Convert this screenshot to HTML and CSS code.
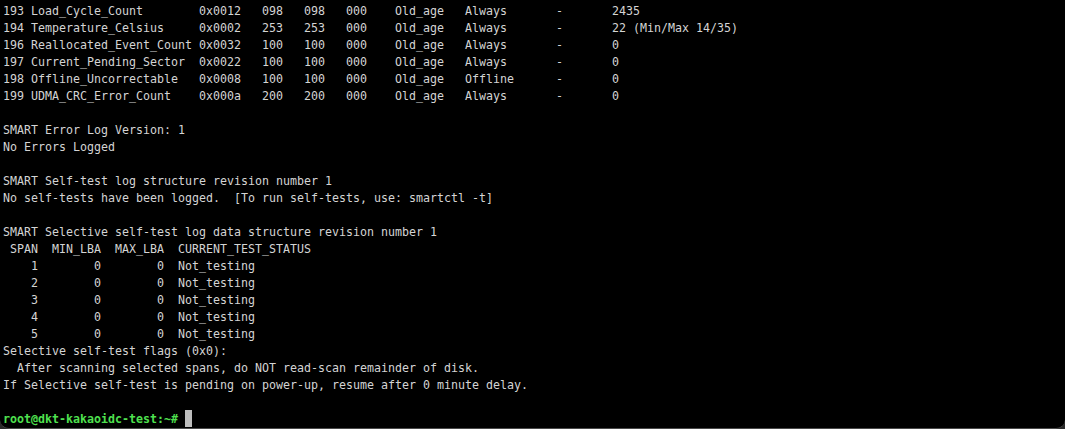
FILE: index.html
```html
<!DOCTYPE html>
<html>
<head>
<meta charset="utf-8">
<link rel="stylesheet" href="styles.css">
</head>
<body>
<div class="window">
<pre class="term">193 Load_Cycle_Count        0x0012   098   098   000    Old_age   Always       -       2435
194 Temperature_Celsius     0x0002   253   253   000    Old_age   Always       -       22 (Min/Max 14/35)
196 Reallocated_Event_Count 0x0032   100   100   000    Old_age   Always       -       0
197 Current_Pending_Sector  0x0022   100   100   000    Old_age   Always       -       0
198 Offline_Uncorrectable   0x0008   100   100   000    Old_age   Offline      -       0
199 UDMA_CRC_Error_Count    0x000a   200   200   000    Old_age   Always       -       0

SMART Error Log Version: 1
No Errors Logged

SMART Self-test log structure revision number 1
No self-tests have been logged.  [To run self-tests, use: smartctl -t]

SMART Selective self-test log data structure revision number 1
 SPAN  MIN_LBA  MAX_LBA  CURRENT_TEST_STATUS
    1        0        0  Not_testing
    2        0        0  Not_testing
    3        0        0  Not_testing
    4        0        0  Not_testing
    5        0        0  Not_testing
Selective self-test flags (0x0):
  After scanning selected spans, do NOT read-scan remainder of disk.
If Selective self-test is pending on power-up, resume after 0 minute delay.

<span class="prompt">root@dkt-kakaoidc-test:~#</span> <span class="cursor"></span></pre>
</div>
</body>
</html>
```
FILE: styles.css
```css
html, body {
  margin: 0;
  padding: 0;
  background: #2a2a2a;
  overflow: hidden;
}

.window {
  box-sizing: border-box;
  width: 1065px;
  height: 429px;
  background: #000;
  border-bottom: 1px solid #4a4a4a;
  border-radius: 0 0 9px 9px;
  overflow: hidden;
}

.term {
  margin: 0;
  padding: 3px 0 0 3px;
  font-family: "DejaVu Sans Mono", "Liberation Mono", monospace;
  font-size: 11.63px;
  line-height: 17px;
  color: #d4d4d4;
  white-space: pre;
}

.prompt {
  color: #4fe04f;
  font-weight: bold;
}

.cursor {
  display: inline-block;
  width: 7px;
  height: 17px;
  margin-top: -1px;
  vertical-align: top;
  background: #bdbdbd;
}
```
